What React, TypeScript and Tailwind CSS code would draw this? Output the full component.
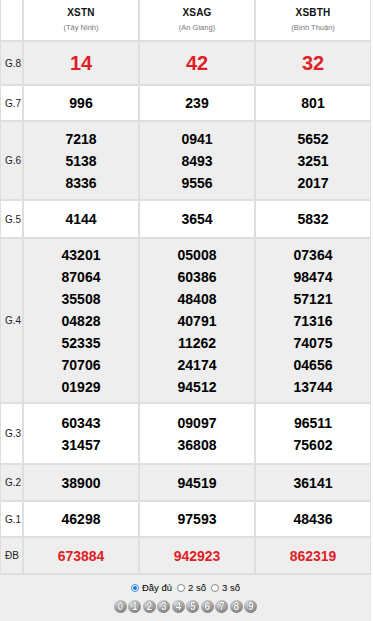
import React from "react";

type Row = { label: string; h: string; gray: boolean; vals: string[][]; red?: boolean; big?: boolean };

const rows: Row[] = [
  { label: "G.8", h: "h-[42px]", gray: true, red: true, big: true, vals: [["14"], ["42"], ["32"]] },
  { label: "G.7", h: "h-[34px]", gray: false, vals: [["996"], ["239"], ["801"]] },
  { label: "G.6", h: "h-[77px]", gray: true, vals: [["7218", "5138", "8336"], ["0941", "8493", "9556"], ["5652", "3251", "2017"]] },
  { label: "G.5", h: "h-[36px]", gray: false, vals: [["4144"], ["3654"], ["5832"]] },
  {
    label: "G.4",
    h: "h-[163px]",
    gray: true,
    vals: [
      ["43201", "87064", "35508", "04828", "52335", "70706", "01929"],
      ["05008", "60386", "48408", "40791", "11262", "24174", "94512"],
      ["07364", "98474", "57121", "71316", "74075", "04656", "13744"],
    ],
  },
  { label: "G.3", h: "h-[59px]", gray: false, vals: [["60343", "31457"], ["09097", "36808"], ["96511", "75602"]] },
  { label: "G.2", h: "h-[35px]", gray: true, vals: [["38900"], ["94519"], ["36141"]] },
  { label: "G.1", h: "h-[34px]", gray: false, vals: [["46298"], ["97593"], ["48436"]] },
  { label: "ĐB", h: "h-[35px]", gray: true, red: true, vals: [["673884"], ["942923"], ["862319"]] },
];

const heads = [
  ["XSTN", "(Tây Ninh)"],
  ["XSAG", "(An Giang)"],
  ["XSBTH", "(Bình Thuận)"],
];

function Radio({ checked }: { checked?: boolean }) {
  return checked ? (
    <span className="inline-flex w-[8px] h-[8px] rounded-full border border-[#3b8de0] bg-white items-center justify-center">
      <span className="w-[4px] h-[4px] rounded-full bg-[#1a73e8]" />
    </span>
  ) : (
    <span className="inline-block w-[8px] h-[8px] rounded-full border border-[#8a8a8a] bg-white" />
  );
}

export default function App() {
  return (
    <div className="w-[373px] h-[621px] bg-white overflow-hidden" style={{ fontFamily: '"Liberation Sans", Arial, sans-serif' }}>
      <div className="w-[371px] bg-[#dedede] px-[1px] pb-[2px] flex flex-col gap-[2px]">
        <div className="grid grid-cols-[21px_1fr_1fr_1fr] gap-[2px] h-[40px]">
          <div className="bg-white" />
          {heads.map(([a, b]) => (
            <div key={a} className="bg-white flex flex-col items-center pt-[6px]">
              <div className="text-[10px] leading-[14px] font-bold text-[#111] tracking-[0.2px]">{a}</div>
              <div className="text-[7.5px] leading-[14px] mt-[1px] text-[#777]">{b}</div>
            </div>
          ))}
        </div>
        {rows.map((r) => {
          const bg = r.gray ? "bg-[#eeeeee]" : "bg-white";
          return (
            <div key={r.label} className={`grid grid-cols-[21px_1fr_1fr_1fr] gap-[2px] ${r.h}`}>
              <div className={`${bg} flex items-center pl-[4px] text-[10px] text-[#222]`}>{r.label}</div>
              {r.vals.map((col, i) => (
                <div key={i} className={`${bg} flex flex-col items-center justify-center`}>
                  {col.map((v, j) => (
                    <div
                      key={j}
                      className={`${r.big ? "text-[20px]" : "text-[14px]"} leading-[22px] font-bold ${r.red ? "text-[#e01e25]" : "text-black"}`}
                    >
                      {v}
                    </div>
                  ))}
                </div>
              ))}
            </div>
          );
        })}
      </div>
      <div className="w-[371px] h-[46px] bg-[#eeeeee] flex flex-col items-center pt-[6px]">
        <div className="flex items-center text-[9.5px] leading-[14px] text-black">
          <span className="flex items-center gap-[3px]">
            <Radio checked />
            <span>Đầy đủ</span>
          </span>
          <span className="flex items-center gap-[3px] ml-[5px]">
            <Radio />
            <span>2 số</span>
          </span>
          <span className="flex items-center gap-[3px] ml-[5px]">
            <Radio />
            <span>3 số</span>
          </span>
        </div>
        <div className="flex gap-[1.5px] mt-[5px]">
          {["0", "1", "2", "3", "4", "5", "6", "7", "8", "9"].map((d) => (
            <span
              key={d}
              className="w-[13px] h-[13px] rounded-full flex items-center justify-center text-[10px] font-bold text-white bg-[radial-gradient(circle_at_40%_30%,#f2f2f2_0%,#a8a8a8_45%,#5e5e5e_100%)] [text-shadow:0_0_1px_#444,0_0_1px_#444]"
            >
              {d}
            </span>
          ))}
        </div>
      </div>
    </div>
  );
}
